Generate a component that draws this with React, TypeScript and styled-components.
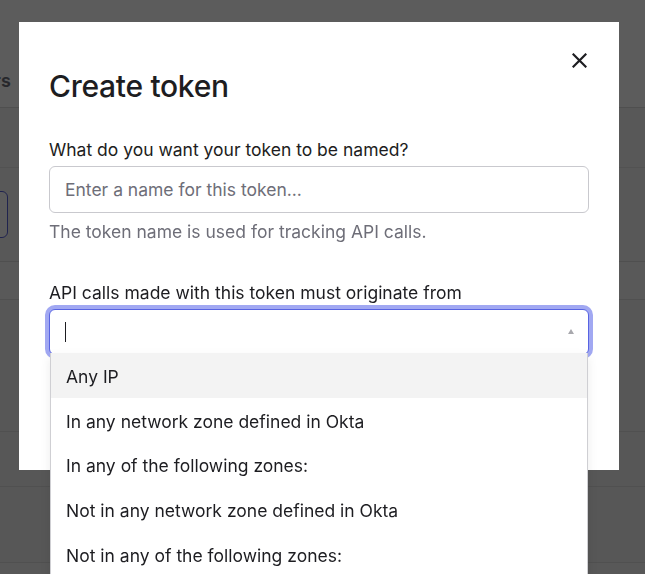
import React from 'react'
import styled, { createGlobalStyle } from 'styled-components'

const GlobalStyle = createGlobalStyle`
  html, body {
    margin: 0;
    padding: 0;
    height: 100%;
    overflow: hidden;
  }
  body {
    font-family: Inter, "Noto Sans", "Liberation Sans", sans-serif;
    color: #1d1d21;
    -webkit-font-smoothing: antialiased;
  }
  * {
    box-sizing: border-box;
  }
`

const Page = styled.div`
  height: 574px;
  background: #f4f4f4;
  display: flex;
  flex-direction: column;
`

const PageHeader = styled.div`
  height: 108px;
  background: #ffffff;
  border-bottom: 1px solid #dcdcdc;
  display: flex;
  align-items: center;
`

const TabLabel = styled.span`
  margin-left: -40px;
  margin-top: 54px;
  font-size: 18px;
  font-weight: 600;
  color: #6e6e78;
`

const Toolbar = styled.div`
  height: 60px;
  border-bottom: 1px solid #e2e2e2;
`

const ActionRow = styled.div`
  height: 94px;
  display: flex;
  align-items: center;
  border-bottom: 1px solid #dcdcdc;
`

const OutlineButton = styled.div`
  margin-left: -40px;
  width: 48px;
  height: 47px;
  border: 1px solid #5861d8;
  border-radius: 6px;
  background: #ffffff;
`

const TableRow = styled.div<{ $height: number; $bg?: string }>`
  height: ${({ $height }) => $height}px;
  background: ${({ $bg }) => $bg ?? '#f2f2f2'};
  border-bottom: 1px solid #dedede;
`

const Overlay = styled.div`
  position: fixed;
  inset: 0;
  background: rgba(0, 0, 0, 0.64);
`

const Modal = styled.div`
  position: fixed;
  top: 22px;
  left: 19px;
  width: 600px;
  height: 448px;
  background: #ffffff;
  padding: 30px 30px 0 30px;
`

const ModalHeader = styled.div`
  display: flex;
  justify-content: space-between;
  align-items: flex-start;
`

const Title = styled.h1`
  margin: 17px 0 0 0;
  font-size: 30px;
  line-height: 35px;
  font-weight: 500;
  letter-spacing: -0.3px;
  color: #1d1d21;
`

const CloseButton = styled.button`
  margin: -3px -10px 0 0;
  width: 40px;
  height: 22px;
  border: 0;
  background: none;
  padding: 0;
  display: flex;
  align-items: center;
  justify-content: center;
  cursor: pointer;
  color: #1d1d21;
`

const Field = styled.div<{ $top: number }>`
  margin-top: ${({ $top }) => $top}px;
  display: flex;
  flex-direction: column;
`

const Label = styled.label`
  font-size: 17.5px;
  line-height: 24px;
  color: #1d1d21;
  margin-bottom: 4px;
`

const TextInput = styled.input`
  height: 47px;
  width: 100%;
  border: 1px solid #c9c9ce;
  border-radius: 6px;
  padding: 0 15px;
  font-family: inherit;
  font-size: 17.5px;
  color: #1d1d21;
  outline: none;

  &::placeholder {
    color: #6e6e78;
  }
`

const Hint = styled.p`
  margin: 7px 0 0 0;
  font-size: 17.5px;
  line-height: 24px;
  color: #6e6e78;
`

const SelectWrap = styled.div`
  position: relative;
`

const SelectBox = styled.div`
  height: 46px;
  border: 1px solid #5864e2;
  border-radius: 6px;
  box-shadow: 0 0 0 4px #a1a8f2;
  display: flex;
  align-items: center;
  justify-content: space-between;
  padding: 0 14px 0 15px;
  background: #ffffff;
`

const Cursor = styled.span`
  width: 1px;
  height: 20px;
  background: #1d1d21;
`

const Caret = styled.span`
  width: 0;
  height: 0;
  border-left: 3.5px solid transparent;
  border-right: 3.5px solid transparent;
  border-bottom: 5px solid #a8a8ad;
  margin-top: -2px;
`

const Menu = styled.ul`
  position: absolute;
  top: 44px;
  left: 1px;
  width: 538px;
  margin: 0;
  padding: 0;
  list-style: none;
  background: #ffffff;
  border: 1px solid #cfcfd3;
  border-top: 0;
  box-shadow: 0 4px 10px rgba(0, 0, 0, 0.08);
`

const MenuItem = styled.li<{ $active?: boolean }>`
  height: 44.8px;
  display: flex;
  align-items: center;
  padding: 2px 0 0 15px;
  font-size: 17.5px;
  color: #1d1d21;
  background: ${({ $active }) => ($active ? '#f3f3f3' : '#ffffff')};
`

const origins = [
  'Any IP',
  'In any network zone defined in Okta',
  'In any of the following zones:',
  'Not in any network zone defined in Okta',
  'Not in any of the following zones:',
]

function CloseIcon() {
  return (
    <svg width="15" height="15" viewBox="0 0 15 15" fill="none">
      <path d="M1.5 1.5L13.5 13.5M13.5 1.5L1.5 13.5" stroke="currentColor" strokeWidth="2.2" strokeLinecap="square" />
    </svg>
  )
}

export default function App() {
  return (
    <>
      <GlobalStyle />
      <Page>
        <PageHeader>
          <TabLabel>Users</TabLabel>
        </PageHeader>
        <Toolbar />
        <ActionRow>
          <OutlineButton />
        </ActionRow>
        <TableRow $height={38} $bg="#f7f7f7" />
        <TableRow $height={132} />
        <TableRow $height={55} />
        <TableRow $height={76} />
      </Page>
      <Overlay />
      <Modal role="dialog" aria-labelledby="create-token-title">
        <ModalHeader>
          <Title id="create-token-title">Create token</Title>
          <CloseButton aria-label="Close">
            <CloseIcon />
          </CloseButton>
        </ModalHeader>

        <Field $top={34}>
          <Label htmlFor="token-name">What do you want your token to be named?</Label>
          <TextInput id="token-name" placeholder="Enter a name for this token..." />
          <Hint>The token name is used for tracking API calls.</Hint>
        </Field>

        <Field $top={37}>
          <Label>API calls made with this token must originate from</Label>
          <SelectWrap>
            <SelectBox>
              <Cursor />
              <Caret />
            </SelectBox>
            <Menu role="listbox">
              {origins.map((item, i) => (
                <MenuItem key={item} $active={i === 0}>
                  {item}
                </MenuItem>
              ))}
            </Menu>
          </SelectWrap>
        </Field>
      </Modal>
    </>
  )
}
